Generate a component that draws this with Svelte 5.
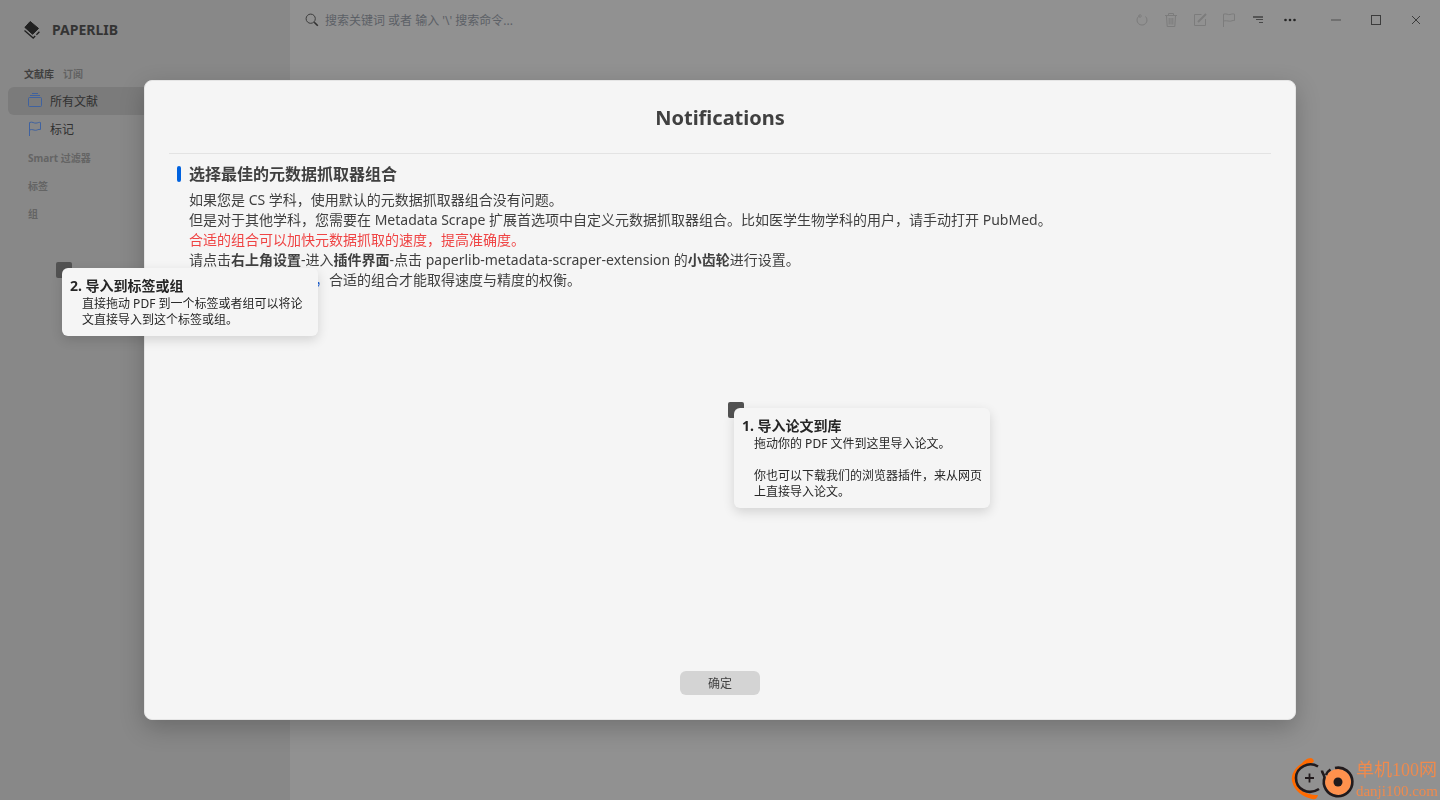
<script lang="ts">
  const sections = ['Smart 过滤器', '标签', '组'];
</script>

<svelte:head><title>Paperlib</title></svelte:head>

<div class="app">
  <aside>
    <div class="brand">
      <svg width="18" height="20" viewBox="0 0 18 20" aria-hidden="true">
        <path d="M6.200 2.500 14.500 9.400 8.600 15.300 .9 8.400Z" fill="#202020" stroke="#202020" stroke-linejoin="round" />
        <path d="M.5 11.500 9.200 19 11.200 17M12.400 15.700 15.400 12.700" fill="none" stroke="#202020" stroke-width="1.300" />
      </svg>
      <span>PAPERLIB</span>
    </div>
    <div class="tabs">
      <button class="current">文献库</button>
      <button>订阅</button>
    </div>
    <nav>
      <a href="#all" class="selected">
        <svg width="16" height="16" viewBox="0 0 16 16" aria-hidden="true">
          <rect x="1.500" y="4.500" width="13" height="9" rx="1" />
          <path d="M3 2.500h10M5 .5h6" />
        </svg>
        所有文献
      </a>
      <a href="#flagged">
        <svg width="16" height="16" viewBox="0 0 16 16" aria-hidden="true">
          <path d="M2.500 15V1.500C5.500 .3 7 2.500 9 2.100 10.700 2 12 1 13.500 1.500V8.500C11 8 10.500 9.300 8.500 9.300 6.500 9.300 5.500 7.900 2.500 9" />
        </svg>
        标记
      </a>
      {#each sections as section}
        <button class="section">{section}</button>
      {/each}
    </nav>
  </aside>

  <main>
    <header>
      <label class="search">
        <svg width="14" height="14" viewBox="0 0 14 14" aria-hidden="true">
          <circle cx="5.700" cy="5.700" r="4.600" fill="none" stroke="#3c3c3c" stroke-width="1" />
          <path d="m9.200 9.200 3.600 3.600" stroke="#303030" stroke-width="1.600" />
        </svg>
        <input type="text" aria-label="搜索" placeholder="搜索关键词 或者 输入 '\' 搜索命令..." />
      </label>
      <div class="tools">
        <button class="dim" aria-label="刷新">
          <svg width="14" height="14" viewBox="0 0 14 14"><path d="M3.500 3.500A5 5 0 1 0 10.500 3.500M3.500 3H7M5.500 1 3.500 3 5.500 5" /></svg>
        </button>
        <button class="dim" aria-label="删除">
          <svg width="14" height="14" viewBox="0 0 14 14"><path d="M1 2.500h12M4.500 2.500V.5h5v2M2.500 3l.7 10.500h7.600L11.500 3M5.200 5v6.500M7 5v6.500M8.800 5v6.500" /></svg>
        </button>
        <button class="dim" aria-label="编辑">
          <svg width="14" height="14" viewBox="0 0 14 14"><path d="M8.500 1.500h-7v11h11V6" /><path d="m5 9 8-8" stroke-width="2" /></svg>
        </button>
        <button class="dim" aria-label="标记">
          <svg width="14" height="14" viewBox="0 0 14 14"><path d="M1.500 14V1.200C4 .2 6 2 8 1.500 10 1 11 .6 12.500 1.200V7.500C10.500 7 9.500 8.500 7.500 8.200 5.500 8 4 7.400 1.500 8" /></svg>
        </button>
        <button aria-label="排序">
          <svg width="14" height="14" viewBox="0 0 14 14"><path d="M2 4h10" stroke="#555" stroke-width="2" /><path d="M5 6.500h7M8 9.500h4" stroke="#484848" /></svg>
        </button>
        <button class="more" aria-label="更多">
          <svg width="14" height="14" viewBox="0 0 14 14"><g fill="#252525" stroke="none"><circle cx="2.500" cy="7" r="1.300" /><circle cx="7" cy="7" r="1.300" /><circle cx="11.500" cy="7" r="1.300" /></g></svg>
        </button>
      </div>
      <div class="window">
        <button aria-label="最小化"><svg width="12" height="12" viewBox="0 0 12 12"><path d="M1 6h10" stroke="#666" stroke-width="1.500" /></svg></button>
        <button aria-label="最大化"><svg width="12" height="12" viewBox="0 0 12 12"><rect x="1.500" y="1.500" width="9" height="9" /></svg></button>
        <button aria-label="关闭"><svg width="12" height="12" viewBox="0 0 12 12"><path d="m2 2 8 8M10 2l-8 8" /></svg></button>
      </div>
    </header>
  </main>
</div>

<div class="dialog" role="dialog" aria-labelledby="dialog-title">
  <h1 id="dialog-title">Notifications</h1>
  <section>
    <h2>选择最佳的元数据抓取器组合</h2>
    <p>如果您是 CS 学科，使用默认的元数据抓取器组合没有问题。</p>
    <p>但是对于其他学科，您需要在 Metadata Scrape 扩展首选项中自定义元数据抓取器组合。比如医学生物学科的用户，请手动打开 PubMed。</p>
    <p class="warn">合适的组合可以加快元数据抓取的速度，提高准确度。</p>
    <p>请点击<b>右上角设置</b>-进入<b>插件界面</b>-点击 paperlib-metadata-scraper-extension 的<b>小齿轮</b>进行设置。</p>
    <p class="after-link"><span>，</span>合适的组合才能取得速度与精度的权衡。</p>
  </section>
  <button class="ok">确定</button>
</div>

<div class="hint import-tag">
  <i></i>
  <div class="card">
    <h3>2. 导入到标签或组</h3>
    <p>直接拖动 PDF 到一个标签或者组可以将论文直接导入到这个标签或组。</p>
  </div>
</div>
<div class="hint import-library">
  <i></i>
  <div class="card">
    <h3>1. 导入论文到库</h3>
    <p>拖动你的 PDF 文件到这里导入论文。<br /><br />你也可以下载我们的浏览器插件，来从网页上直接导入论文。</p>
  </div>
</div>

<div class="watermark">
  <svg width="64" height="43" viewBox="0 0 64 43" aria-hidden="true">
    <path d="M20 1C16 1 13 4 10 7 4 11 0 17 1 24 3 34 12 40 21 42 24 43 26 42 27 38 13 38 4 31 4 21 4 13 10 7 21 6 24 5 23 2 20 1Z" fill="#ff6a00" />
    <path d="M27 9.500C18 4 5 10 5 21 5 32 17 39 28 32" fill="none" stroke="#211a1c" stroke-width="2.600" />
    <path d="M18.500 16.500v9M14 21h9" stroke="#211a1c" stroke-width="1.800" />
    <circle cx="47" cy="25" r="13" fill="#ff914d" />
    <path d="M44 11A14.300 14.300 0 1 1 33.500 20.500C33 17 31 16 31 13.500M35 18C36 15 37 14 39.500 12.500" fill="none" stroke="#211a1c" stroke-width="2.600" />
    <circle cx="47" cy="25" r="4.500" fill="#211a1c" />
  </svg>
  <div>
    <strong>单机100网</strong>
    <span>danji100.com</span>
  </div>
</div>

<style>
  :global(body) {
    margin: 0;
    background: #919191;
    font-family: "Noto Sans", "Noto Sans CJK SC", sans-serif;
    font-size: 12px;
    color: #303030;
  }
  button, input {
    font: inherit;
    color: inherit;
    background: none;
    border: 0;
    padding: 0;
    margin: 0;
  }
  h1, h2, h3, p { margin: 0; }
  svg { display: block; flex: none; }
  .app { display: flex; min-height: 100vh; }
  aside {
    width: 290px;
    flex: none;
    box-sizing: border-box;
    padding: 15px 8px;
    background: #888;
  }
  .brand {
    display: flex;
    align-items: center;
    gap: 10px;
    height: 28px;
    padding-left: 16px;
    font-size: 14px;
    font-weight: 700;
    color: #343434;
  }
  .tabs {
    display: flex;
    gap: 9px;
    padding: 23px 16px 5px;
    font-size: 10px;
    line-height: 16px;
    font-weight: 700;
    color: #626262;
  }
  .tabs .current { color: #404040; }
  nav { display: flex; flex-direction: column; }
  nav a, .section {
    display: flex;
    align-items: center;
    gap: 7px;
    height: 28px;
    padding: 0 19px;
    border-radius: 6px;
    color: #303030;
    text-decoration: none;
  }
  nav a svg { fill: none; stroke: #3f62a0; }
  .selected { background: #7b7b7b; }
  nav .section {
    padding: 0 20px;
    font-size: 10px;
    font-weight: 700;
    color: #646464;
  }
  main { flex: 1; min-width: 0; }
  header {
    display: flex;
    align-items: center;
    height: 40px;
    padding: 0 12px 0 15px;
  }
  .search {
    flex: 1;
    display: flex;
    align-items: center;
    gap: 6px;
  }
  .search input { flex: 1; min-width: 0; outline: 0; }
  .search input::placeholder { color: #5c6066; opacity: 1; }
  .tools { display: flex; gap: 15px; margin-right: 27px; }
  .tools svg, .window svg { fill: none; stroke: #3c3c3c; }
  .tools .dim svg { stroke: #7c7c7c; }
  .tools .more { margin-left: 3px; }
  .window { display: flex; gap: 16px; }
  .window button { display: flex; justify-content: center; width: 24px; }
  .dialog {
    position: fixed;
    inset: 10%;
    box-sizing: border-box;
    display: flex;
    flex-direction: column;
    align-items: center;
    padding: 23px 24px 24px;
    border: 1px solid #e5e5e5;
    border-radius: 8px;
    background: #f5f5f5;
    box-shadow: 0 8px 24px rgba(0, 0, 0, 0.22);
    color: #404040;
  }
  h1 {
    align-self: stretch;
    height: 49px;
    border-bottom: 1px solid #e3e3e3;
    font-size: 20px;
    line-height: 28px;
    text-align: center;
  }
  section {
    flex: 1;
    align-self: stretch;
    padding: 10px 8px;
    font-size: 14px;
    line-height: 20px;
  }
  section p { padding-left: 12px; }
  section h2 {
    display: flex;
    align-items: center;
    gap: 8px;
    margin-bottom: 6px;
    font-size: 16px;
    line-height: 20px;
  }
  section h2::before {
    content: "";
    width: 4px;
    height: 16px;
    border-radius: 2px;
    background: #0062df;
  }
  .warn { color: #ef4444; }
  section .after-link { padding-left: 138px; }
  .after-link span { color: #1d62d8; }
  .ok {
    width: 80px;
    height: 24px;
    border-radius: 6px;
    background: #d4d4d4;
  }
  .hint { position: fixed; padding: 6px 0 0 6px; color: #262626; }
  .hint i {
    position: absolute;
    top: 0;
    left: 0;
    width: 16px;
    height: 16px;
    border-radius: 2px;
    background: #525252;
  }
  .import-tag { top: 262px; left: 56px; }
  .import-library { top: calc(50% + 2px); left: calc(50% + 8px); }
  .card {
    position: relative;
    box-sizing: border-box;
    width: 256px;
    padding: 8px;
    border-radius: 6px;
    background: #f5f5f5;
    box-shadow: 0 4px 12px rgba(0, 0, 0, 0.14);
  }
  h3 { font-size: 14px; line-height: 20px; }
  .card p { margin-left: 12px; line-height: 16px; }
  .watermark {
    position: fixed;
    right: 2px;
    bottom: 0;
    display: flex;
    gap: 1px;
    color: #ef8a4d;
    font-family: "Liberation Serif", "Noto Sans CJK SC", serif;
  }
  .watermark div { display: flex; flex-direction: column; }
  .watermark strong { font-size: 18px; line-height: 26px; font-weight: 400; }
  .watermark span { font-size: 15px; line-height: 17px; }
</style>
